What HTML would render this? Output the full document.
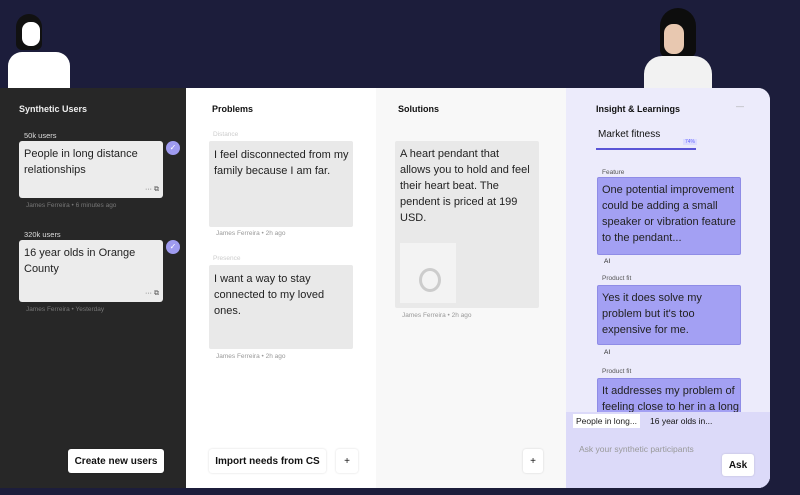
<!DOCTYPE html>
<html><head><meta charset="utf-8"><style>
*{box-sizing:border-box;margin:0;padding:0}
body{width:800px;height:495px;background:#1c1d3b;font-family:"Liberation Sans",sans-serif;position:relative;overflow:hidden}
.abs{position:absolute}
.left{left:0;top:88px;width:186px;height:400px;background:#272727}
.main{left:186px;top:88px;width:584px;height:400px;background:#fff;border-radius:0 12px 12px 0;overflow:hidden}
.sol{left:190px;top:0;width:190px;height:400px;background:#f8f8f8}
.ins{left:380px;top:0;width:204px;height:400px;background:#ecebfb}
.ask{left:380px;top:324px;width:204px;height:76px;background:#dcdaf9}
h4{position:absolute;font-size:9px;font-weight:bold;color:#111}
.card{position:absolute;background:#e9e9e9;border-radius:2px;font-size:11px;line-height:16px;color:#222;padding:6px 5px;white-space:nowrap}
.ucard{position:absolute;background:#ececec;border-radius:3px;font-size:11px;line-height:16px;color:#222;padding:5px 5px;white-space:nowrap}
.meta{position:absolute;font-size:6.5px;color:#999}
.lab{position:absolute;font-size:6.5px;color:#ccc}
.ilab{position:absolute;font-size:6.5px;color:#555}
.pcard{position:absolute;background:#a3a0f3;border:1px solid #8f8ce6;border-radius:2px;font-size:11px;line-height:16px;color:#222;padding:4px 4px;white-space:nowrap}
.btn{position:absolute;background:#fff;border-radius:3px;font-size:10px;color:#111;display:flex;align-items:center;justify-content:center;box-shadow:0 0 2px rgba(0,0,0,.15)}
.chk{position:absolute;width:14px;height:14px;border-radius:50%;background:#9f9bf0;color:#fff;font-size:8px;text-align:center;line-height:14px}
</style></head><body>
<div class="abs" style="left:16px;top:14px;width:26px;height:36px;background:#111;border-radius:13px 13px 6px 6px"></div>
<div class="abs" style="left:22px;top:22px;width:18px;height:24px;background:#fff;border-radius:8px"></div>
<div class="abs" style="left:8px;top:52px;width:62px;height:36px;background:#fff;border-radius:14px 14px 0 0"></div>
<div class="abs" style="left:660px;top:8px;width:36px;height:50px;background:#0d0d0d;border-radius:18px 18px 8px 8px"></div>
<div class="abs" style="left:664px;top:24px;width:20px;height:30px;background:#e8c8b0;border-radius:9px"></div>
<div class="abs" style="left:644px;top:56px;width:68px;height:32px;background:#f2f2f2;border-radius:18px 18px 0 0"></div>

<div class="abs left">
  <h4 style="left:19px;top:16px;color:#eee">Synthetic Users</h4>
  <div class="abs" style="left:24px;top:43px;font-size:7.5px;color:#ddd">50k users</div>
  <div class="ucard" style="left:19px;top:53px;width:144px;height:57px">People in long distance<br>relationships</div>
  <div class="abs" style="left:145px;top:98px;font-size:7px;color:#555">··· ⧉</div>
  <div class="chk" style="left:166px;top:53px">✓</div>
  <div class="meta" style="left:26px;top:114px;color:#777">James Ferreira • 6 minutes ago</div>
  <div class="abs" style="left:24px;top:142px;font-size:7.5px;color:#ddd">320k users</div>
  <div class="ucard" style="left:19px;top:152px;width:144px;height:62px">16 year olds in Orange<br>County</div>
  <div class="abs" style="left:145px;top:202px;font-size:7px;color:#555">··· ⧉</div>
  <div class="chk" style="left:166px;top:152px">✓</div>
  <div class="meta" style="left:26px;top:218px;color:#777">James Ferreira • Yesterday</div>
  <div class="btn" style="left:68px;top:361px;width:96px;height:24px;font-weight:bold;font-size:10px">Create new users</div>
</div>

<div class="abs main">
  <div class="abs sol"></div>
  <div class="abs ins"></div>
  <div class="abs ask"></div>
  <h4 style="left:26px;top:16px">Problems</h4>
  <div class="lab" style="left:27px;top:43px">Distance</div>
  <div class="card" style="left:23px;top:53px;width:144px;height:86px">I feel disconnected from my<br>family because I am far.</div>
  <div class="meta" style="left:30px;top:142px">James Ferreira • 2h ago</div>
  <div class="lab" style="left:27px;top:167px">Presence</div>
  <div class="card" style="left:23px;top:177px;width:144px;height:84px">I want a way to stay<br>connected to my loved<br>ones.</div>
  <div class="meta" style="left:30px;top:265px">James Ferreira • 2h ago</div>
  <div class="btn" style="left:23px;top:361px;width:117px;height:24px;font-weight:bold">Import needs from CS</div>
  <div class="btn" style="left:150px;top:361px;width:22px;height:24px">+</div>

  <h4 style="left:212px;top:16px">Solutions</h4>
  <div class="card" style="left:209px;top:53px;width:144px;height:167px;padding:5px 5px">A heart pendant that<br>allows you to hold and feel<br>their heart beat. The<br>pendent is priced at 199<br>USD.</div>
  <div class="abs" style="left:214px;top:155px;width:56px;height:60px;background:#f3f3f3"></div>
  <div class="abs" style="left:233px;top:180px;width:22px;height:24px;border:3px solid #ccc;border-radius:50%"></div>
  <div class="meta" style="left:216px;top:224px">James Ferreira • 2h ago</div>
  <div class="btn" style="left:337px;top:361px;width:20px;height:24px">+</div>

  <h4 style="left:410px;top:16px">Insight &amp; Learnings</h4>
  <div class="abs" style="left:550px;top:14px;font-size:8px;color:#aaa">—</div>
  <div class="abs" style="left:412px;top:41px;font-size:10px;color:#111">Market fitness</div>
  <div class="abs" style="left:497px;top:51px;font-size:5px;color:#66f;background:#dcdcff;padding:0 2px">74%</div>
  <div class="abs" style="left:410px;top:60px;width:100px;height:2px;background:#5a55d6"></div>
  <div class="ilab" style="left:416px;top:81px">Feature</div>
  <div class="pcard" style="left:411px;top:89px;width:144px;height:78px">One potential improvement<br>could be adding a small<br>speaker or vibration feature<br>to the pendant...</div>
  <div class="ilab" style="left:418px;top:170px;color:#222">AI</div>
  <div class="ilab" style="left:416px;top:187px">Product fit</div>
  <div class="pcard" style="left:411px;top:197px;width:144px;height:60px">Yes it does solve my<br>problem but it's too<br>expensive for me.</div>
  <div class="ilab" style="left:418px;top:261px;color:#222">AI</div>
  <div class="ilab" style="left:416px;top:280px">Product fit</div>
  <div class="pcard" style="left:411px;top:290px;width:144px;height:40px;overflow:hidden">It addresses my problem of<br>feeling close to her in a long</div>
  <div class="abs ask" style="background:#dcdaf9"></div>
  <div class="abs" style="left:387px;top:326px;background:#fff;font-size:8.5px;color:#222;padding:2px 3px">People in long...</div>
  <div class="abs" style="left:464px;top:328px;font-size:8.5px;color:#111">16 year olds in...</div>
  <div class="abs" style="left:393px;top:356px;font-size:8.5px;color:#999">Ask your synthetic participants</div>
  <div class="btn" style="left:536px;top:366px;width:32px;height:22px;font-weight:bold">Ask</div>
</div>
</body></html>
